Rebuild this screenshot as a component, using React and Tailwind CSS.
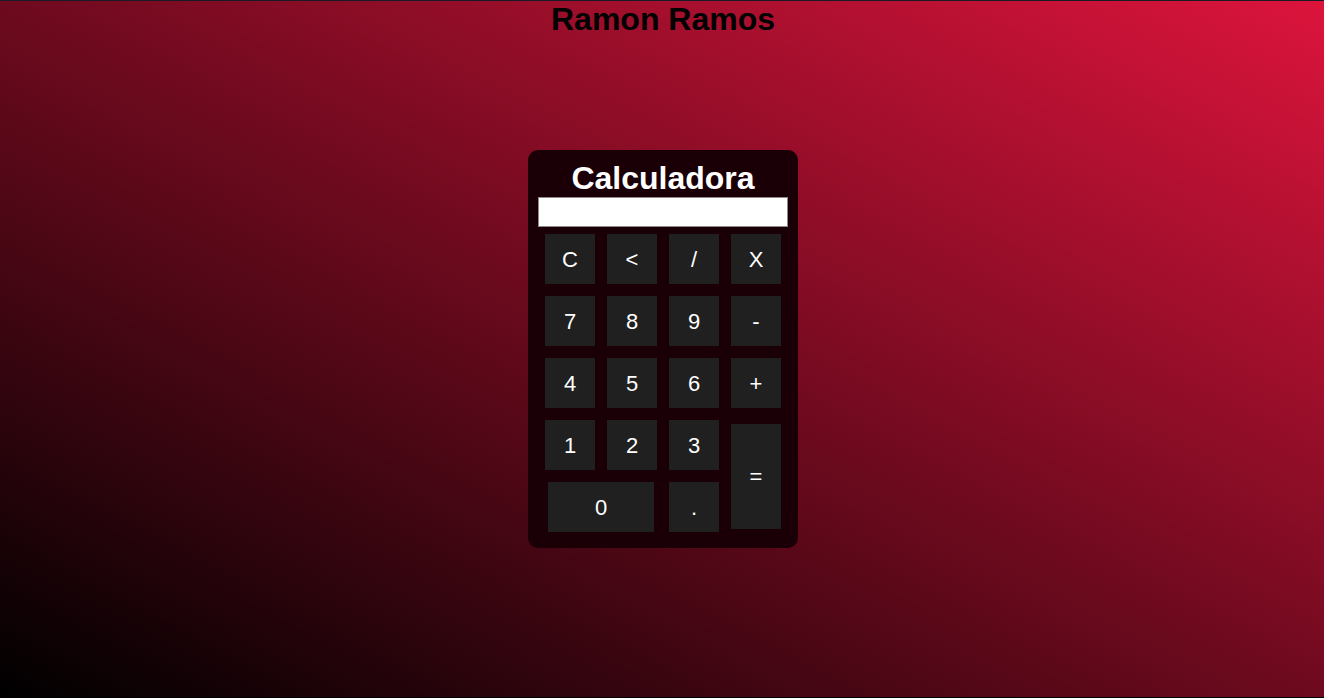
const rows = [
  ['C', '<', '/', 'X'],
  ['7', '8', '9', '-'],
  ['4', '5', '6', '+'],
];

function Key({ label, className = '' }) {
  return (
    <button className={`bg-[#202020] text-white text-[22px] flex items-center justify-center ${className}`}>
      {label}
    </button>
  );
}

function App() {
  return (
    <div className="min-h-[698px] h-screen bg-[linear-gradient(to_top_right,#000000,#dc143c)] border-t border-[#1a1a26] border-b border-b-black flex flex-col items-center font-['Liberation_Sans',Arial,sans-serif] overflow-hidden">
      <h1 className="text-[32px] leading-[36px] font-bold text-black m-0 ml-[2px]">Ramon Ramos</h1>

      <div className="mt-[113px] ml-[2px] w-[270px] bg-[#1a0006] rounded-[10px] px-[10px] pt-[10px] pb-[16px] flex flex-col">
        <h2 className="text-white text-[32px] leading-[37px] font-bold text-center">Calculadora</h2>
        <input className="h-[30px] w-full bg-white border border-[#8a8a8a] outline-none" readOnly />

        <div className="mt-[7px] self-center grid grid-cols-[repeat(4,50px)] auto-rows-[50px] gap-3">
          {rows.flat().map((k, i) => (
            <Key key={i} label={k} />
          ))}
          <Key label="1" />
          <Key label="2" />
          <Key label="3" />
          <Key label="=" className="row-span-2 self-center h-[105px]" />
          <Key label="0" className="col-span-2 justify-self-center w-[106px]" />
          <Key label="." />
        </div>
      </div>
    </div>
  );
}

export default App;
